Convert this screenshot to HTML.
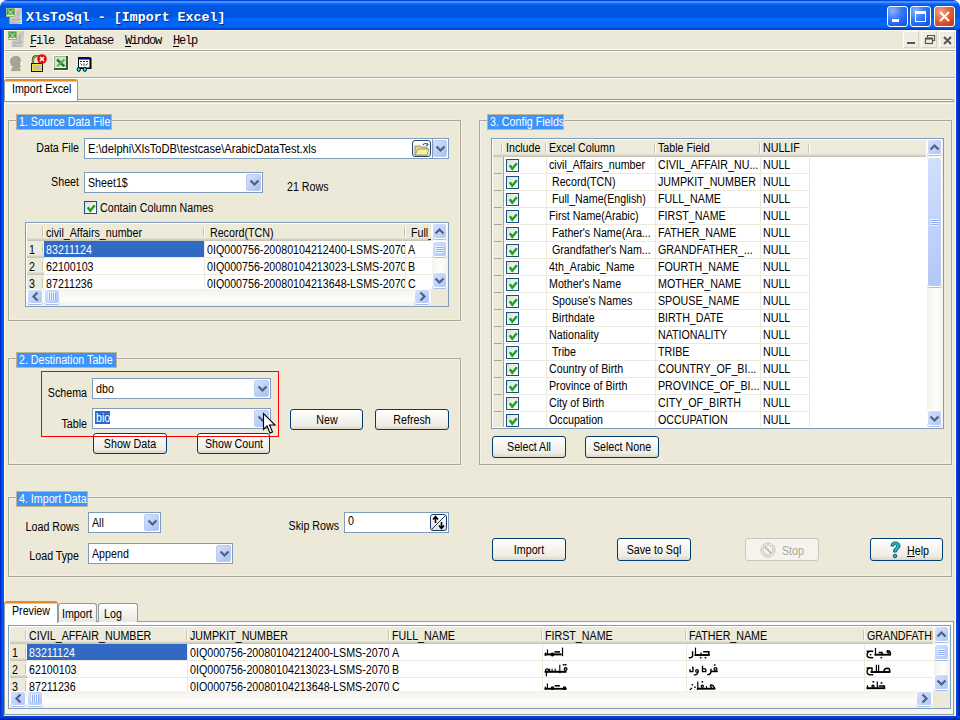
<!DOCTYPE html><html><head><meta charset="utf-8"><style>
*{box-sizing:border-box;margin:0;padding:0}
html,body{width:960px;height:720px;overflow:hidden;background:#fff}
body{position:relative;font-family:"Liberation Sans",sans-serif;font-size:12px;color:#000;letter-spacing:0}
.ab{position:absolute}
.t{position:absolute;white-space:nowrap;line-height:13px;transform:scaleX(var(--sx,0.89));transform-origin:0 0}
.gb{position:absolute;border:1px solid #ACA899;box-shadow:inset 1px 1px 0 #F3F1E6, 1px 1px 0 #F3F1E6, -1px -1px 0 #F1EFE2, inset -1px -1px 0 #F1EFE2}
.gl{position:absolute;background:#3D93F8;border:1px solid #BDB498;color:#fff;height:16px;line-height:13px;padding-left:2px;white-space:nowrap}
.ed{position:absolute;background:#fff;border:1px solid #7F9DB9}
.cbtn{position:absolute;width:15px;border-radius:2px;border:1px solid #B9CBF4;background:linear-gradient(135deg,#D6E2FC 0%,#BFD0F8 50%,#A9C0F3 100%)}
.btn{position:absolute;border:1px solid #003C74;border-radius:3px;background:linear-gradient(to bottom,#FFFFFF 0%,#F6F5F0 40%,#EEEDE5 80%,#DAD6C9 100%);text-align:center;white-space:nowrap;line-height:18px}
.sb{position:absolute;border-radius:3px;border:1px solid #fff;background:linear-gradient(135deg,#D3E0FD 0%,#C3D4FB 50%,#B1C6F6 100%)}
.chk{position:absolute;width:13px;height:13px;border:1px solid #1C5180;background:linear-gradient(135deg,#DCDCD7 0%,#F4F4F1 60%,#FFFFFF 100%)}
.hdr{position:absolute;background:#EBEADB;box-shadow:inset 0 -1px 0 #CBC7B8, inset 0 -2px 0 #D6D2C2, inset 0 -3px 0 #E2DECD}
.cell{position:absolute;white-space:nowrap;overflow:hidden;line-height:16px;padding-left:2px}
.cell>i{font-style:normal;display:inline-block;transform:scaleX(0.89);transform-origin:0 0}
</style></head><body>
<div class="ab" style="left:0;top:20px;width:960px;height:700px;background:#ECE9D8"></div>
<div class="ab" style="left:0;top:0;width:960px;height:30px;border-radius:7px 7px 0 0;background:linear-gradient(to bottom,#0A46DA 0px,#0A46DA 1px,#3C92FF 1px,#3C92FF 3px,#0C6CFF 3px,#0A64F4 5px,#0058E2 5px,#0058E2 18px,#0067F8 18px,#0065F6 27px,#0052E4 28px,#0036C6 30px)"></div>
<div class="ab" style="left:0;top:29px;width:4px;height:691px;background:linear-gradient(to right,#0019CF,#0055EA 50%,#0056EE)"></div>
<div class="ab" style="left:956px;top:29px;width:4px;height:691px;background:linear-gradient(to right,#0050E6,#0030C0 60%,#001A8C)"></div>
<div class="ab" style="left:0;top:716px;width:960px;height:4px;background:linear-gradient(to bottom,#0050E6,#0030C0 60%,#001A8C)"></div>
<div class="ab" style="left:4px;top:30px;width:1px;height:686px;background:#FFF8E4"></div>
<div class="ab" style="left:955px;top:30px;width:1px;height:686px;background:#FFF8E4"></div>
<div class="ab" style="left:4px;top:30px;width:952px;height:1px;background:#FFF8E4"></div>
<svg class="ab" style="left:6px;top:8px" width="17" height="17" viewBox="0 0 17 17">
<defs><linearGradient id="gg6" x1="0" y1="0" x2="1" y2="1"><stop offset="0" stop-color="#F2F2EE"/><stop offset="0.5" stop-color="#C4C4C0"/><stop offset="1" stop-color="#E4E4E0"/></linearGradient></defs>
<rect x="3.5" y="0" width="12.5" height="16" fill="url(#gg6)"/>
<path d="M5 11c2 1.5 7 1.5 10 0M5 14c2 1.5 7 1.5 10 0M12 3v10" stroke="#A8A8A4" stroke-width="1" fill="none"/>
<rect x="0" y="0" width="9" height="9" fill="#D8D0A8"/>
<rect x="0.5" y="0.5" width="8" height="8" fill="#4E9A4A"/>
<path d="M2 2l5 5M7 2l-5 5" stroke="#8ED88A" stroke-width="1.5"/>
<path d="M1 7.5h7" stroke="#E8F4E0" stroke-width="1"/>
</svg>
<div class="t" style="left:26px;top:10px;font-family:'Liberation Mono', monospace;font-weight:bold;font-size:13.3px;color:#fff;letter-spacing:0;--sx:1;text-shadow:1px 1px 0 #0B2A8A;line-height:16px">XlsToSql - [Import Excel]</div>
<div class="ab" style="left:887px;top:6px;width:21px;height:21px;border:1px solid #fff;border-radius:3px;background:radial-gradient(circle at 25% 20%,#8FB4FF 0%,#3C7CF6 40%,#1F5FE6 75%,#1650D8 100%)"><div class="ab" style="left:4px;top:12px;width:7px;height:3px;background:#fff"></div></div>
<div class="ab" style="left:910px;top:6px;width:21px;height:21px;border:1px solid #fff;border-radius:3px;background:radial-gradient(circle at 25% 20%,#8FB4FF 0%,#3C7CF6 40%,#1F5FE6 75%,#1650D8 100%)"><div class="ab" style="left:4px;top:4px;width:11px;height:11px;border:1px solid #fff;border-top-width:3px"></div></div>
<div class="ab" style="left:934px;top:6px;width:21px;height:21px;border:1px solid #fff;border-radius:3px;background:radial-gradient(circle at 30% 25%,#F0A48C 0%,#E26A43 40%,#D4451E 75%,#C23A14 100%)"><svg class="ab" style="left:0;top:0" width="19" height="19"><path d="M5 5L14 14M14 5L5 14" stroke="#fff" stroke-width="2.2"/></svg></div>
<svg class="ab" style="left:8px;top:31px" width="17" height="17" viewBox="0 0 17 17">
<defs><linearGradient id="gg8" x1="0" y1="0" x2="1" y2="1"><stop offset="0" stop-color="#F2F2EE"/><stop offset="0.5" stop-color="#C4C4C0"/><stop offset="1" stop-color="#E4E4E0"/></linearGradient></defs>
<rect x="3.5" y="0" width="12.5" height="16" fill="url(#gg8)"/>
<path d="M5 11c2 1.5 7 1.5 10 0M5 14c2 1.5 7 1.5 10 0M12 3v10" stroke="#A8A8A4" stroke-width="1" fill="none"/>
<rect x="0" y="0" width="9" height="9" fill="#D8D0A8"/>
<rect x="0.5" y="0.5" width="8" height="8" fill="#4E9A4A"/>
<path d="M2 2l5 5M7 2l-5 5" stroke="#8ED88A" stroke-width="1.5"/>
<path d="M1 7.5h7" stroke="#E8F4E0" stroke-width="1"/>
</svg>
<div class="t" style="left:30px;top:34px;font-family:'Liberation Mono', monospace;font-size:12px;letter-spacing:-1.2px;line-height:14px;--sx:1"><u style="text-underline-offset:2px">F</u>ile</div>
<div class="t" style="left:65px;top:34px;font-family:'Liberation Mono', monospace;font-size:12px;letter-spacing:-1.2px;line-height:14px;--sx:1"><u style="text-underline-offset:2px">D</u>atabase</div>
<div class="t" style="left:125px;top:34px;font-family:'Liberation Mono', monospace;font-size:12px;letter-spacing:-1.2px;line-height:14px;--sx:1"><u style="text-underline-offset:2px">W</u>indow</div>
<div class="t" style="left:173px;top:34px;font-family:'Liberation Mono', monospace;font-size:12px;letter-spacing:-1.2px;line-height:14px;--sx:1"><u style="text-underline-offset:2px">H</u>elp</div>
<div class="ab" style="left:903px;top:31px;width:16px;height:17px;border:1px solid #fff;border-right-color:#D8D4C4;border-bottom-color:#D8D4C4;background:#EFEDE2"><div class="ab" style="left:3px;top:10px;width:8px;height:2px;background:#555"></div></div>
<div class="ab" style="left:921px;top:31px;width:16px;height:17px;border:1px solid #fff;border-right-color:#D8D4C4;border-bottom-color:#D8D4C4;background:#EFEDE2"><svg class="ab" style="left:0;top:0" width="15" height="16"><path d="M5.5 5.5V3.5H12.5V8.5H10.5" stroke="#555" stroke-width="1.2" fill="none"/><rect x="3.5" y="6.5" width="7" height="5" stroke="#555" stroke-width="1.2" fill="none"/><path d="M3.5 6.5h7" stroke="#555" stroke-width="2"/></svg></div>
<div class="ab" style="left:939px;top:31px;width:16px;height:17px;border:1px solid #fff;border-right-color:#D8D4C4;border-bottom-color:#D8D4C4;background:#EFEDE2"><svg class="ab" style="left:0;top:0" width="15" height="16"><path d="M4 5L11 12M11 5L4 12" stroke="#555" stroke-width="2"/></svg></div>
<div class="ab" style="left:5px;top:49px;width:950px;height:1px;background:#fff"></div>
<div class="ab" style="left:5px;top:50px;width:950px;height:1px;background:#ACA899"></div>
<div class="ab" style="left:5px;top:51px;width:950px;height:1px;background:#fff"></div>
<svg class="ab" style="left:8px;top:54px" width="86" height="20" viewBox="0 0 86 20">
<path d="M8 2c3 0 5 2 5 5 0 2-1 3-1 4l1 1c-1 1-1 2-1 3l1 2H3c0-2 1-3 2-4-2-1-3-3-3-6 0-3 3-5 6-5z" fill="#A6A497"/>
<path d="M12 8l2 1-1 2" stroke="#fff" stroke-width="1" fill="none"/>
<path d="M25 9V6c0-3 2-4 4-4s4 1 4 4v3" stroke="#1A1A1A" stroke-width="2.2" fill="none"/>
<path d="M25 9V6c0-3 2-4 4-4s4 1 4 4v3" stroke="#F4E64A" stroke-width="1" fill="none"/>
<rect x="23.5" y="9.5" width="11" height="8" fill="#B8B8B8" stroke="#111" stroke-width="1"/>
<rect x="24.5" y="10.5" width="9" height="6" fill="#C0C0C0" stroke="#F2E23A" stroke-width="1"/>
<circle cx="34" cy="5" r="4.8" fill="#E01010"/>
<path d="M32 3l4 4M36 3l-4 4" stroke="#fff" stroke-width="1.5"/>
<rect x="45" y="1" width="16" height="16" fill="#FAFAF4"/>
<rect x="46" y="2" width="14" height="14" fill="#D2E8CC"/>
<path d="M46.5 15.5V2.5H59" stroke="#9AB890" stroke-width="1" fill="none"/>
<path d="M46 15H59V2" stroke="#2F5F25" stroke-width="2" fill="none"/>
<path d="M49 5.5L56.5 12.5" stroke="#2E7A2E" stroke-width="2.4"/>
<path d="M56.5 5.5L49 12.5" stroke="#58A858" stroke-width="1.8"/>
<rect x="47.5" y="12.8" width="10" height="1.2" fill="#EEF6EA"/>
<rect x="71" y="4" width="12.5" height="11" fill="#000"/>
<rect x="70.5" y="3.5" width="11.5" height="10.5" fill="#fff" stroke="#000" stroke-width="1"/>
<rect x="70" y="3" width="12.5" height="2.6" fill="#00007A"/>
<path d="M72 7.5h2M75 7.5h2M78 7.5h2M72.5 9.5l1.5 1.5M76 9.5v2M79.5 9.5l-1.5 2" stroke="#222" stroke-width="1"/>
<path d="M72 14.2h3.5" stroke="#000" stroke-width="1.2"/>
<ellipse cx="70.8" cy="15.4" rx="1.6" ry="2" fill="#22E4F8" stroke="#000" stroke-width="1"/>
<ellipse cx="76.8" cy="15.4" rx="1.6" ry="2" fill="#22E4F8" stroke="#000" stroke-width="1"/>
</svg>
<div class="ab" style="left:5px;top:77px;width:950px;height:1px;background:#ACA899"></div>
<div class="ab" style="left:5px;top:78px;width:950px;height:1px;background:#fff"></div>
<div class="ab" style="left:77px;top:99px;width:877px;height:3px;border:1px solid #919B9C;border-left:none;border-radius:0 2px 2px 0;background:#fff"></div>
<div class="ab" style="left:4px;top:101px;width:950px;height:1px;background:#919B9C"></div>
<div class="ab" style="left:5px;top:103px;width:947px;height:1px;background:#F7F6F0"></div>
<div class="ab" style="left:4px;top:79px;width:74px;height:22px;border:1px solid #919B9C;border-top:none;border-bottom:none;border-radius:3px 3px 0 0;background:#fff;overflow:hidden"><div class="ab" style="left:0;top:0;width:74px;height:2px;background:#E68B2C"></div><div class="ab" style="left:0;top:2px;width:74px;height:1px;background:#FFC73C"></div></div>
<div class="t" style="left:12px;top:83px">Import Excel</div>
<div class="gb" style="left:8px;top:120px;width:453px;height:201px"></div>
<div class="ab" style="left:16px;top:114px;width:96px;height:16px;background:#3D93F8;border:1px solid #BDB498;left:16px"></div>
<div class="t" style="left:19px;top:116px;color:#fff">1. Source Data File</div>
<div class="t" style="left:-221px;width:300px;text-align:right;top:142px;transform-origin:100% 0;">Data File</div>
<div class="ed" style="left:84px;top:138px;width:365px;height:21px"></div>
<div class="t" style="left:88px;top:143px;--sx:0.925">E:\delphi\XlsToDB\testcase\ArabicDataTest.xls</div>
<div class="ab" style="left:412px;top:140px;width:19px;height:17px;border:1px solid #2A4A78;border-radius:3px;background:linear-gradient(#FFFFFF,#E8E6DC)">
<svg class="ab" style="left:1px;top:1px" width="16" height="14" viewBox="0 0 16 14">
<path d="M1 4h5l1 1h6v8H1z" fill="#E0D890" stroke="#9A8A3A" stroke-width="0.8"/>
<path d="M1 13l3-6h11l-2 6z" fill="#F4EEB0" stroke="#9A8A3A" stroke-width="0.8"/>
<path d="M9 3c1-2 4-2 5 0" stroke="#2050C0" stroke-width="1.2" fill="none"/><path d="M13 1l1 2-2 0.5" stroke="#2050C0" stroke-width="1" fill="none"/>
</svg></div>
<div class="ab" style="left:432px;top:139px;width:1px;height:19px;background:#7F9DB9"></div>
<div class="cbtn" style="left:433px;top:140px;height:17px;width:14px"><svg class="ab" style="left:-1px;top:0" width="15" height="15"><path d="M3.5 5.5L7.5 9.5L11.5 5.5" stroke="#4D6185" stroke-width="2.2" fill="none"/></svg></div>
<div class="t" style="left:-221px;width:300px;text-align:right;top:176px;transform-origin:100% 0;">Sheet</div>
<div class="ed" style="left:84px;top:172px;width:179px;height:21px"></div>
<div class="t" style="left:88px;top:177px;">Sheet1$</div>
<div class="cbtn" style="left:246px;top:174px;height:17px"><svg class="ab" style="left:-0.5px;top:0.0px" width="15" height="15"><path d="M3.5 5.5L7.5 9.5L11.5 5.5" stroke="#4D6185" stroke-width="2.2" fill="none"/></svg></div>
<div class="t" style="left:287px;top:181px;">21 Rows</div>
<div class="chk" style="left:84px;top:201px"><svg class="ab" style="left:1px;top:1px" width="11" height="11"><path d="M1.8 4.3L4.3 7.8L8.8 2.3" stroke="#21A121" stroke-width="2.5" fill="none"/></svg></div>
<div class="t" style="left:100px;top:202px;">Contain Column Names</div>
<div class="ab" style="left:25px;top:222px;width:424px;height:85px;border:1px solid #7F9DB9;background:#fff"></div>
<div class="ab" style="left:27px;top:224px;width:404px;height:65px;overflow:hidden;background:#fff"><div class="hdr" style="left:0;top:0;width:404px;height:17px"></div><div class="ab" style="left:15px;top:3px;width:1px;height:10px;background:#C7C5B2"></div><div class="ab" style="left:16px;top:3px;width:1px;height:10px;background:#fff"></div><div class="cell" style="left:17px;top:0px;width:161px;height:17px;line-height:18px"><i>civil_Affairs_number</i></div><div class="ab" style="left:176px;top:3px;width:1px;height:10px;background:#C7C5B2"></div><div class="ab" style="left:177px;top:3px;width:1px;height:10px;background:#fff"></div><div class="cell" style="left:178px;top:0px;width:201px;height:17px;line-height:18px"><i>&nbsp;Record(TCN)</i></div><div class="ab" style="left:377px;top:3px;width:1px;height:10px;background:#C7C5B2"></div><div class="ab" style="left:378px;top:3px;width:1px;height:10px;background:#fff"></div><div class="cell" style="left:379px;top:0px;width:55px;height:17px;line-height:18px"><i>&nbsp;Full_Name</i></div><div class="ab" style="left:432px;top:3px;width:1px;height:10px;background:#C7C5B2"></div><div class="ab" style="left:433px;top:3px;width:1px;height:10px;background:#fff"></div><div class="hdr" style="left:0px;top:17px;width:17px;height:17px"></div><div class="ab" style="left:15px;top:20px;width:1px;height:10px;background:#C7C5B2"></div><div class="ab" style="left:16px;top:20px;width:1px;height:10px;background:#fff"></div><div class="cell" style="left:0px;top:17px;width:20px;height:17px;line-height:18px"><i>1</i></div><div class="cell" style="left:17px;top:17px;width:160px;height:16px;line-height:18px;background:#316AC5;color:#fff;"><i>83211124</i></div><div class="ab" style="left:177px;top:17px;width:1px;height:17px;background:#EBEADB"></div><div class="cell" style="left:178px;top:17px;width:200px;height:16px;line-height:18px;"><i>0IQ000756-20080104212400-LSMS-20701</i></div><div class="ab" style="left:378px;top:17px;width:1px;height:17px;background:#EBEADB"></div><div class="cell" style="left:379px;top:17px;width:54px;height:16px;line-height:18px;"><i>A</i></div><div class="ab" style="left:433px;top:17px;width:1px;height:17px;background:#EBEADB"></div><div class="ab" style="left:17px;top:33px;width:417px;height:1px;background:#EBEADB"></div><div class="hdr" style="left:0px;top:34px;width:17px;height:17px"></div><div class="ab" style="left:15px;top:37px;width:1px;height:10px;background:#C7C5B2"></div><div class="ab" style="left:16px;top:37px;width:1px;height:10px;background:#fff"></div><div class="cell" style="left:0px;top:34px;width:20px;height:17px;line-height:18px"><i>2</i></div><div class="cell" style="left:17px;top:34px;width:160px;height:16px;line-height:18px;"><i>62100103</i></div><div class="ab" style="left:177px;top:34px;width:1px;height:17px;background:#EBEADB"></div><div class="cell" style="left:178px;top:34px;width:200px;height:16px;line-height:18px;"><i>0IQ000756-20080104213023-LSMS-20701</i></div><div class="ab" style="left:378px;top:34px;width:1px;height:17px;background:#EBEADB"></div><div class="cell" style="left:379px;top:34px;width:54px;height:16px;line-height:18px;"><i>B</i></div><div class="ab" style="left:433px;top:34px;width:1px;height:17px;background:#EBEADB"></div><div class="ab" style="left:17px;top:50px;width:417px;height:1px;background:#EBEADB"></div><div class="hdr" style="left:0px;top:51px;width:17px;height:17px"></div><div class="ab" style="left:15px;top:54px;width:1px;height:10px;background:#C7C5B2"></div><div class="ab" style="left:16px;top:54px;width:1px;height:10px;background:#fff"></div><div class="cell" style="left:0px;top:51px;width:20px;height:17px;line-height:18px"><i>3</i></div><div class="cell" style="left:17px;top:51px;width:160px;height:16px;line-height:18px;"><i>87211236</i></div><div class="ab" style="left:177px;top:51px;width:1px;height:17px;background:#EBEADB"></div><div class="cell" style="left:178px;top:51px;width:200px;height:16px;line-height:18px;"><i>0IQ000756-20080104213648-LSMS-20701</i></div><div class="ab" style="left:378px;top:51px;width:1px;height:17px;background:#EBEADB"></div><div class="cell" style="left:379px;top:51px;width:54px;height:16px;line-height:18px;"><i>C</i></div><div class="ab" style="left:433px;top:51px;width:1px;height:17px;background:#EBEADB"></div><div class="ab" style="left:17px;top:67px;width:417px;height:1px;background:#EBEADB"></div></div>
<div class="ab" style="left:431px;top:224px;width:17px;height:65px;background:linear-gradient(to right,#F3F1EA,#FEFEFB 60%,#F3F1EA)"></div>
<div class="ab" style="left:431px;top:224px;width:17px;height:65px;background:linear-gradient(to right,#F3F1EA,#FEFEFB 60%,#F3F1EA);box-shadow:inset 1px 0 0 #fff"></div>
<div class="sb" style="left:432px;top:223px;width:15px;height:16px;box-shadow:0 1px 0 #A9BDE9"><svg class="ab" style="left:-1.0px;top:-0.5px" width="15" height="15"><path d="M3.5 9.5L7.5 5.5L11.5 9.5" stroke="#4D6185" stroke-width="2.2" fill="none"/></svg></div>
<div class="sb" style="left:432px;top:241px;width:15px;height:16px;box-shadow:0 1px 0 #A9BDE9"><svg class="ab" style="left:2px;top:3px" width="8" height="8"><path d="M0 1.5h8M0 3.5h8M0 5.5h8M0 7.5h8" stroke="#EEF4FE" stroke-width="1"/><path d="M1 2.5h7M1 4.5h7M1 6.5h7" stroke="#8CB0F8" stroke-width="1"/></svg></div>
<div class="sb" style="left:432px;top:272px;width:15px;height:16px;box-shadow:0 1px 0 #A9BDE9"><svg class="ab" style="left:-1.0px;top:-0.5px" width="15" height="15"><path d="M3.5 5.5L7.5 9.5L11.5 5.5" stroke="#4D6185" stroke-width="2.2" fill="none"/></svg></div>
<div class="ab" style="left:27px;top:289px;width:404px;height:17px;background:linear-gradient(to bottom,#F3F1EA,#FEFEFB 60%,#F3F1EA)"></div>
<div class="sb" style="left:27px;top:289px;width:16px;height:15px;box-shadow:0 1px 0 #A9BDE9"><svg class="ab" style="left:-0.5px;top:-1.0px" width="15" height="15"><path d="M9.5 3.5L5.5 7.5L9.5 11.5" stroke="#4D6185" stroke-width="2.2" fill="none"/></svg></div>
<div class="sb" style="left:44px;top:289px;width:16px;height:15px;box-shadow:0 1px 0 #A9BDE9"><svg class="ab" style="left:3px;top:2px" width="9" height="8"><path d="M0.5 0v8M2.5 0v8M4.5 0v8M6.5 0v8" stroke="#EEF4FE" stroke-width="1"/><path d="M1.5 1v7M3.5 1v7M5.5 1v7M7.5 1v7" stroke="#8CB0F8" stroke-width="1"/></svg></div>
<div class="sb" style="left:414px;top:289px;width:16px;height:15px;box-shadow:0 1px 0 #A9BDE9"><svg class="ab" style="left:-0.5px;top:-1.0px" width="15" height="15"><path d="M5.5 3.5L9.5 7.5L5.5 11.5" stroke="#4D6185" stroke-width="2.2" fill="none"/></svg></div>
<div class="ab" style="left:431px;top:289px;width:17px;height:17px;background:#ECE9D8"></div>
<div class="gb" style="left:8px;top:358px;width:453px;height:107px"></div>
<div class="ab" style="left:16px;top:352px;width:101px;height:16px;background:#3D93F8;border:1px solid #BDB498;left:16px"></div>
<div class="t" style="left:19px;top:354px;color:#fff">2. Destination Table</div>
<div class="t" style="left:-213px;width:300px;text-align:right;top:387px;transform-origin:100% 0;">Schema</div>
<div class="ed" style="left:92px;top:378px;width:179px;height:21px"></div>
<div class="t" style="left:96px;top:383px;">dbo</div>
<div class="cbtn" style="left:254px;top:380px;height:17px"><svg class="ab" style="left:-0.5px;top:0.0px" width="15" height="15"><path d="M3.5 5.5L7.5 9.5L11.5 5.5" stroke="#4D6185" stroke-width="2.2" fill="none"/></svg></div>
<div class="t" style="left:-213px;width:300px;text-align:right;top:418px;transform-origin:100% 0;">Table</div>
<div class="ed" style="left:92px;top:408px;width:179px;height:21px"></div>
<div class="cbtn" style="left:254px;top:410px;height:17px"><svg class="ab" style="left:-0.5px;top:0.0px" width="15" height="15"><path d="M3.5 5.5L7.5 9.5L11.5 5.5" stroke="#4D6185" stroke-width="2.2" fill="none"/></svg></div>
<div class="ab" style="left:95px;top:411px;width:15px;height:13px;background:#316AC5"></div>
<div class="t" style="left:96px;top:412px;color:#fff">bio</div>
<div class="btn" style="left:93px;top:433px;width:74px;height:21px;"></div>
<div class="t" style="left:-20.0px;top:438px;width:300px;text-align:center;transform-origin:50% 0">Show Data</div>
<div class="btn" style="left:197px;top:433px;width:73px;height:21px;"></div>
<div class="t" style="left:83.5px;top:438px;width:300px;text-align:center;transform-origin:50% 0">Show Count</div>
<div class="btn" style="left:290px;top:409px;width:73px;height:21px;"></div>
<div class="t" style="left:176.5px;top:414px;width:300px;text-align:center;transform-origin:50% 0">New</div>
<div class="btn" style="left:375px;top:409px;width:74px;height:21px;"></div>
<div class="t" style="left:262.0px;top:414px;width:300px;text-align:center;transform-origin:50% 0">Refresh</div>
<div class="ab" style="left:41px;top:371px;width:238px;height:66px;border:1px solid #FF0000"></div>
<svg class="ab" style="left:262px;top:412px" width="16" height="24" viewBox="0 0 16 24">
<path d="M1.5 1.5V17.5L5 14L8 21L10.5 20L7.5 13H13Z" fill="#fff" stroke="#000" stroke-width="1.1" stroke-linejoin="miter"/>
</svg>
<div class="gb" style="left:479px;top:120px;width:473px;height:345px"></div>
<div class="ab" style="left:16px;top:114px;width:77px;height:16px;background:#3D93F8;border:1px solid #BDB498;left:487px"></div>
<div class="t" style="left:490px;top:116px;color:#fff">3. Config Fields</div>
<div class="ab" style="left:491px;top:138px;width:453px;height:291px;border:1px solid #7F9DB9;background:#fff"></div>
<div class="ab" style="left:493px;top:140px;width:433px;height:287px;overflow:hidden;background:#fff"><div class="hdr" style="left:0;top:0;width:433px;height:17px"></div><div class="ab" style="left:8px;top:3px;width:1px;height:10px;background:#C7C5B2"></div><div class="ab" style="left:9px;top:3px;width:1px;height:10px;background:#fff"></div><div class="cell" style="left:11px;top:0px;width:43px;height:17px;line-height:16px"><i>Include</i></div><div class="ab" style="left:52px;top:3px;width:1px;height:10px;background:#C7C5B2"></div><div class="ab" style="left:53px;top:3px;width:1px;height:10px;background:#fff"></div><div class="cell" style="left:54px;top:0px;width:109px;height:17px;line-height:16px"><i>Excel Column</i></div><div class="ab" style="left:161px;top:3px;width:1px;height:10px;background:#C7C5B2"></div><div class="ab" style="left:162px;top:3px;width:1px;height:10px;background:#fff"></div><div class="cell" style="left:163px;top:0px;width:105px;height:17px;line-height:16px"><i>Table Field</i></div><div class="ab" style="left:266px;top:3px;width:1px;height:10px;background:#C7C5B2"></div><div class="ab" style="left:267px;top:3px;width:1px;height:10px;background:#fff"></div><div class="cell" style="left:268px;top:0px;width:49px;height:17px;line-height:16px"><i>NULLIF</i></div><div class="ab" style="left:315px;top:3px;width:1px;height:10px;background:#C7C5B2"></div><div class="ab" style="left:316px;top:3px;width:1px;height:10px;background:#fff"></div><div class="ab" style="left:-1px;top:17px;width:11px;height:17px;background:#EBEADB"></div><div class="ab" style="left:10px;top:17px;width:1px;height:17px;background:#A9A696"></div><div class="ab" style="left:1px;top:33px;width:8px;height:1px;background:#A9A696"></div><div class="ab" style="left:1px;top:34px;width:8px;height:1px;background:#fff"></div><div class="cell" style="left:11px;top:17px;width:42px;height:16px;line-height:16px;"><i></i></div><div class="ab" style="left:53px;top:17px;width:1px;height:17px;background:#EBEADB"></div><div class="cell" style="left:54px;top:17px;width:108px;height:16px;line-height:16px;"><i>civil_Affairs_number</i></div><div class="ab" style="left:162px;top:17px;width:1px;height:17px;background:#EBEADB"></div><div class="cell" style="left:163px;top:17px;width:104px;height:16px;line-height:16px;"><i>CIVIL_AFFAIR_NU...</i></div><div class="ab" style="left:267px;top:17px;width:1px;height:17px;background:#EBEADB"></div><div class="cell" style="left:268px;top:17px;width:48px;height:16px;line-height:16px;"><i>NULL</i></div><div class="ab" style="left:316px;top:17px;width:1px;height:17px;background:#EBEADB"></div><div class="ab" style="left:11px;top:33px;width:306px;height:1px;background:#EBEADB"></div><div class="ab" style="left:-1px;top:34px;width:11px;height:17px;background:#EBEADB"></div><div class="ab" style="left:10px;top:34px;width:1px;height:17px;background:#A9A696"></div><div class="ab" style="left:1px;top:50px;width:8px;height:1px;background:#A9A696"></div><div class="ab" style="left:1px;top:51px;width:8px;height:1px;background:#fff"></div><div class="cell" style="left:11px;top:34px;width:42px;height:16px;line-height:16px;"><i></i></div><div class="ab" style="left:53px;top:34px;width:1px;height:17px;background:#EBEADB"></div><div class="cell" style="left:54px;top:34px;width:108px;height:16px;line-height:16px;"><i>&nbsp;Record(TCN)</i></div><div class="ab" style="left:162px;top:34px;width:1px;height:17px;background:#EBEADB"></div><div class="cell" style="left:163px;top:34px;width:104px;height:16px;line-height:16px;"><i>JUMPKIT_NUMBER</i></div><div class="ab" style="left:267px;top:34px;width:1px;height:17px;background:#EBEADB"></div><div class="cell" style="left:268px;top:34px;width:48px;height:16px;line-height:16px;"><i>NULL</i></div><div class="ab" style="left:316px;top:34px;width:1px;height:17px;background:#EBEADB"></div><div class="ab" style="left:11px;top:50px;width:306px;height:1px;background:#EBEADB"></div><div class="ab" style="left:-1px;top:51px;width:11px;height:17px;background:#EBEADB"></div><div class="ab" style="left:10px;top:51px;width:1px;height:17px;background:#A9A696"></div><div class="ab" style="left:1px;top:67px;width:8px;height:1px;background:#A9A696"></div><div class="ab" style="left:1px;top:68px;width:8px;height:1px;background:#fff"></div><div class="cell" style="left:11px;top:51px;width:42px;height:16px;line-height:16px;"><i></i></div><div class="ab" style="left:53px;top:51px;width:1px;height:17px;background:#EBEADB"></div><div class="cell" style="left:54px;top:51px;width:108px;height:16px;line-height:16px;"><i>&nbsp;Full_Name(English)</i></div><div class="ab" style="left:162px;top:51px;width:1px;height:17px;background:#EBEADB"></div><div class="cell" style="left:163px;top:51px;width:104px;height:16px;line-height:16px;"><i>FULL_NAME</i></div><div class="ab" style="left:267px;top:51px;width:1px;height:17px;background:#EBEADB"></div><div class="cell" style="left:268px;top:51px;width:48px;height:16px;line-height:16px;"><i>NULL</i></div><div class="ab" style="left:316px;top:51px;width:1px;height:17px;background:#EBEADB"></div><div class="ab" style="left:11px;top:67px;width:306px;height:1px;background:#EBEADB"></div><div class="ab" style="left:-1px;top:68px;width:11px;height:17px;background:#EBEADB"></div><div class="ab" style="left:10px;top:68px;width:1px;height:17px;background:#A9A696"></div><div class="ab" style="left:1px;top:84px;width:8px;height:1px;background:#A9A696"></div><div class="ab" style="left:1px;top:85px;width:8px;height:1px;background:#fff"></div><div class="cell" style="left:11px;top:68px;width:42px;height:16px;line-height:16px;"><i></i></div><div class="ab" style="left:53px;top:68px;width:1px;height:17px;background:#EBEADB"></div><div class="cell" style="left:54px;top:68px;width:108px;height:16px;line-height:16px;"><i>First Name(Arabic)</i></div><div class="ab" style="left:162px;top:68px;width:1px;height:17px;background:#EBEADB"></div><div class="cell" style="left:163px;top:68px;width:104px;height:16px;line-height:16px;"><i>FIRST_NAME</i></div><div class="ab" style="left:267px;top:68px;width:1px;height:17px;background:#EBEADB"></div><div class="cell" style="left:268px;top:68px;width:48px;height:16px;line-height:16px;"><i>NULL</i></div><div class="ab" style="left:316px;top:68px;width:1px;height:17px;background:#EBEADB"></div><div class="ab" style="left:11px;top:84px;width:306px;height:1px;background:#EBEADB"></div><div class="ab" style="left:-1px;top:85px;width:11px;height:17px;background:#EBEADB"></div><div class="ab" style="left:10px;top:85px;width:1px;height:17px;background:#A9A696"></div><div class="ab" style="left:1px;top:101px;width:8px;height:1px;background:#A9A696"></div><div class="ab" style="left:1px;top:102px;width:8px;height:1px;background:#fff"></div><div class="cell" style="left:11px;top:85px;width:42px;height:16px;line-height:16px;"><i></i></div><div class="ab" style="left:53px;top:85px;width:1px;height:17px;background:#EBEADB"></div><div class="cell" style="left:54px;top:85px;width:108px;height:16px;line-height:16px;"><i>&nbsp;Father's Name(Ara...</i></div><div class="ab" style="left:162px;top:85px;width:1px;height:17px;background:#EBEADB"></div><div class="cell" style="left:163px;top:85px;width:104px;height:16px;line-height:16px;"><i>FATHER_NAME</i></div><div class="ab" style="left:267px;top:85px;width:1px;height:17px;background:#EBEADB"></div><div class="cell" style="left:268px;top:85px;width:48px;height:16px;line-height:16px;"><i>NULL</i></div><div class="ab" style="left:316px;top:85px;width:1px;height:17px;background:#EBEADB"></div><div class="ab" style="left:11px;top:101px;width:306px;height:1px;background:#EBEADB"></div><div class="ab" style="left:-1px;top:102px;width:11px;height:17px;background:#EBEADB"></div><div class="ab" style="left:10px;top:102px;width:1px;height:17px;background:#A9A696"></div><div class="ab" style="left:1px;top:118px;width:8px;height:1px;background:#A9A696"></div><div class="ab" style="left:1px;top:119px;width:8px;height:1px;background:#fff"></div><div class="cell" style="left:11px;top:102px;width:42px;height:16px;line-height:16px;"><i></i></div><div class="ab" style="left:53px;top:102px;width:1px;height:17px;background:#EBEADB"></div><div class="cell" style="left:54px;top:102px;width:108px;height:16px;line-height:16px;"><i>&nbsp;Grandfather's Nam...</i></div><div class="ab" style="left:162px;top:102px;width:1px;height:17px;background:#EBEADB"></div><div class="cell" style="left:163px;top:102px;width:104px;height:16px;line-height:16px;"><i>GRANDFATHER_...</i></div><div class="ab" style="left:267px;top:102px;width:1px;height:17px;background:#EBEADB"></div><div class="cell" style="left:268px;top:102px;width:48px;height:16px;line-height:16px;"><i>NULL</i></div><div class="ab" style="left:316px;top:102px;width:1px;height:17px;background:#EBEADB"></div><div class="ab" style="left:11px;top:118px;width:306px;height:1px;background:#EBEADB"></div><div class="ab" style="left:-1px;top:119px;width:11px;height:17px;background:#EBEADB"></div><div class="ab" style="left:10px;top:119px;width:1px;height:17px;background:#A9A696"></div><div class="ab" style="left:1px;top:135px;width:8px;height:1px;background:#A9A696"></div><div class="ab" style="left:1px;top:136px;width:8px;height:1px;background:#fff"></div><div class="cell" style="left:11px;top:119px;width:42px;height:16px;line-height:16px;"><i></i></div><div class="ab" style="left:53px;top:119px;width:1px;height:17px;background:#EBEADB"></div><div class="cell" style="left:54px;top:119px;width:108px;height:16px;line-height:16px;"><i>4th_Arabic_Name</i></div><div class="ab" style="left:162px;top:119px;width:1px;height:17px;background:#EBEADB"></div><div class="cell" style="left:163px;top:119px;width:104px;height:16px;line-height:16px;"><i>FOURTH_NAME</i></div><div class="ab" style="left:267px;top:119px;width:1px;height:17px;background:#EBEADB"></div><div class="cell" style="left:268px;top:119px;width:48px;height:16px;line-height:16px;"><i>NULL</i></div><div class="ab" style="left:316px;top:119px;width:1px;height:17px;background:#EBEADB"></div><div class="ab" style="left:11px;top:135px;width:306px;height:1px;background:#EBEADB"></div><div class="ab" style="left:-1px;top:136px;width:11px;height:17px;background:#EBEADB"></div><div class="ab" style="left:10px;top:136px;width:1px;height:17px;background:#A9A696"></div><div class="ab" style="left:1px;top:152px;width:8px;height:1px;background:#A9A696"></div><div class="ab" style="left:1px;top:153px;width:8px;height:1px;background:#fff"></div><div class="cell" style="left:11px;top:136px;width:42px;height:16px;line-height:16px;"><i></i></div><div class="ab" style="left:53px;top:136px;width:1px;height:17px;background:#EBEADB"></div><div class="cell" style="left:54px;top:136px;width:108px;height:16px;line-height:16px;"><i>Mother's Name</i></div><div class="ab" style="left:162px;top:136px;width:1px;height:17px;background:#EBEADB"></div><div class="cell" style="left:163px;top:136px;width:104px;height:16px;line-height:16px;"><i>MOTHER_NAME</i></div><div class="ab" style="left:267px;top:136px;width:1px;height:17px;background:#EBEADB"></div><div class="cell" style="left:268px;top:136px;width:48px;height:16px;line-height:16px;"><i>NULL</i></div><div class="ab" style="left:316px;top:136px;width:1px;height:17px;background:#EBEADB"></div><div class="ab" style="left:11px;top:152px;width:306px;height:1px;background:#EBEADB"></div><div class="ab" style="left:-1px;top:153px;width:11px;height:17px;background:#EBEADB"></div><div class="ab" style="left:10px;top:153px;width:1px;height:17px;background:#A9A696"></div><div class="ab" style="left:1px;top:169px;width:8px;height:1px;background:#A9A696"></div><div class="ab" style="left:1px;top:170px;width:8px;height:1px;background:#fff"></div><div class="cell" style="left:11px;top:153px;width:42px;height:16px;line-height:16px;"><i></i></div><div class="ab" style="left:53px;top:153px;width:1px;height:17px;background:#EBEADB"></div><div class="cell" style="left:54px;top:153px;width:108px;height:16px;line-height:16px;"><i>&nbsp;Spouse's Names</i></div><div class="ab" style="left:162px;top:153px;width:1px;height:17px;background:#EBEADB"></div><div class="cell" style="left:163px;top:153px;width:104px;height:16px;line-height:16px;"><i>SPOUSE_NAME</i></div><div class="ab" style="left:267px;top:153px;width:1px;height:17px;background:#EBEADB"></div><div class="cell" style="left:268px;top:153px;width:48px;height:16px;line-height:16px;"><i>NULL</i></div><div class="ab" style="left:316px;top:153px;width:1px;height:17px;background:#EBEADB"></div><div class="ab" style="left:11px;top:169px;width:306px;height:1px;background:#EBEADB"></div><div class="ab" style="left:-1px;top:170px;width:11px;height:17px;background:#EBEADB"></div><div class="ab" style="left:10px;top:170px;width:1px;height:17px;background:#A9A696"></div><div class="ab" style="left:1px;top:186px;width:8px;height:1px;background:#A9A696"></div><div class="ab" style="left:1px;top:187px;width:8px;height:1px;background:#fff"></div><div class="cell" style="left:11px;top:170px;width:42px;height:16px;line-height:16px;"><i></i></div><div class="ab" style="left:53px;top:170px;width:1px;height:17px;background:#EBEADB"></div><div class="cell" style="left:54px;top:170px;width:108px;height:16px;line-height:16px;"><i>&nbsp;Birthdate</i></div><div class="ab" style="left:162px;top:170px;width:1px;height:17px;background:#EBEADB"></div><div class="cell" style="left:163px;top:170px;width:104px;height:16px;line-height:16px;"><i>BIRTH_DATE</i></div><div class="ab" style="left:267px;top:170px;width:1px;height:17px;background:#EBEADB"></div><div class="cell" style="left:268px;top:170px;width:48px;height:16px;line-height:16px;"><i>NULL</i></div><div class="ab" style="left:316px;top:170px;width:1px;height:17px;background:#EBEADB"></div><div class="ab" style="left:11px;top:186px;width:306px;height:1px;background:#EBEADB"></div><div class="ab" style="left:-1px;top:187px;width:11px;height:17px;background:#EBEADB"></div><div class="ab" style="left:10px;top:187px;width:1px;height:17px;background:#A9A696"></div><div class="ab" style="left:1px;top:203px;width:8px;height:1px;background:#A9A696"></div><div class="ab" style="left:1px;top:204px;width:8px;height:1px;background:#fff"></div><div class="cell" style="left:11px;top:187px;width:42px;height:16px;line-height:16px;"><i></i></div><div class="ab" style="left:53px;top:187px;width:1px;height:17px;background:#EBEADB"></div><div class="cell" style="left:54px;top:187px;width:108px;height:16px;line-height:16px;"><i>Nationality</i></div><div class="ab" style="left:162px;top:187px;width:1px;height:17px;background:#EBEADB"></div><div class="cell" style="left:163px;top:187px;width:104px;height:16px;line-height:16px;"><i>NATIONALITY</i></div><div class="ab" style="left:267px;top:187px;width:1px;height:17px;background:#EBEADB"></div><div class="cell" style="left:268px;top:187px;width:48px;height:16px;line-height:16px;"><i>NULL</i></div><div class="ab" style="left:316px;top:187px;width:1px;height:17px;background:#EBEADB"></div><div class="ab" style="left:11px;top:203px;width:306px;height:1px;background:#EBEADB"></div><div class="ab" style="left:-1px;top:204px;width:11px;height:17px;background:#EBEADB"></div><div class="ab" style="left:10px;top:204px;width:1px;height:17px;background:#A9A696"></div><div class="ab" style="left:1px;top:220px;width:8px;height:1px;background:#A9A696"></div><div class="ab" style="left:1px;top:221px;width:8px;height:1px;background:#fff"></div><div class="cell" style="left:11px;top:204px;width:42px;height:16px;line-height:16px;"><i></i></div><div class="ab" style="left:53px;top:204px;width:1px;height:17px;background:#EBEADB"></div><div class="cell" style="left:54px;top:204px;width:108px;height:16px;line-height:16px;"><i>&nbsp;Tribe</i></div><div class="ab" style="left:162px;top:204px;width:1px;height:17px;background:#EBEADB"></div><div class="cell" style="left:163px;top:204px;width:104px;height:16px;line-height:16px;"><i>TRIBE</i></div><div class="ab" style="left:267px;top:204px;width:1px;height:17px;background:#EBEADB"></div><div class="cell" style="left:268px;top:204px;width:48px;height:16px;line-height:16px;"><i>NULL</i></div><div class="ab" style="left:316px;top:204px;width:1px;height:17px;background:#EBEADB"></div><div class="ab" style="left:11px;top:220px;width:306px;height:1px;background:#EBEADB"></div><div class="ab" style="left:-1px;top:221px;width:11px;height:17px;background:#EBEADB"></div><div class="ab" style="left:10px;top:221px;width:1px;height:17px;background:#A9A696"></div><div class="ab" style="left:1px;top:237px;width:8px;height:1px;background:#A9A696"></div><div class="ab" style="left:1px;top:238px;width:8px;height:1px;background:#fff"></div><div class="cell" style="left:11px;top:221px;width:42px;height:16px;line-height:16px;"><i></i></div><div class="ab" style="left:53px;top:221px;width:1px;height:17px;background:#EBEADB"></div><div class="cell" style="left:54px;top:221px;width:108px;height:16px;line-height:16px;"><i>Country of Birth</i></div><div class="ab" style="left:162px;top:221px;width:1px;height:17px;background:#EBEADB"></div><div class="cell" style="left:163px;top:221px;width:104px;height:16px;line-height:16px;"><i>COUNTRY_OF_BI...</i></div><div class="ab" style="left:267px;top:221px;width:1px;height:17px;background:#EBEADB"></div><div class="cell" style="left:268px;top:221px;width:48px;height:16px;line-height:16px;"><i>NULL</i></div><div class="ab" style="left:316px;top:221px;width:1px;height:17px;background:#EBEADB"></div><div class="ab" style="left:11px;top:237px;width:306px;height:1px;background:#EBEADB"></div><div class="ab" style="left:-1px;top:238px;width:11px;height:17px;background:#EBEADB"></div><div class="ab" style="left:10px;top:238px;width:1px;height:17px;background:#A9A696"></div><div class="ab" style="left:1px;top:254px;width:8px;height:1px;background:#A9A696"></div><div class="ab" style="left:1px;top:255px;width:8px;height:1px;background:#fff"></div><div class="cell" style="left:11px;top:238px;width:42px;height:16px;line-height:16px;"><i></i></div><div class="ab" style="left:53px;top:238px;width:1px;height:17px;background:#EBEADB"></div><div class="cell" style="left:54px;top:238px;width:108px;height:16px;line-height:16px;"><i>Province of Birth</i></div><div class="ab" style="left:162px;top:238px;width:1px;height:17px;background:#EBEADB"></div><div class="cell" style="left:163px;top:238px;width:104px;height:16px;line-height:16px;"><i>PROVINCE_OF_BI...</i></div><div class="ab" style="left:267px;top:238px;width:1px;height:17px;background:#EBEADB"></div><div class="cell" style="left:268px;top:238px;width:48px;height:16px;line-height:16px;"><i>NULL</i></div><div class="ab" style="left:316px;top:238px;width:1px;height:17px;background:#EBEADB"></div><div class="ab" style="left:11px;top:254px;width:306px;height:1px;background:#EBEADB"></div><div class="ab" style="left:-1px;top:255px;width:11px;height:17px;background:#EBEADB"></div><div class="ab" style="left:10px;top:255px;width:1px;height:17px;background:#A9A696"></div><div class="ab" style="left:1px;top:271px;width:8px;height:1px;background:#A9A696"></div><div class="ab" style="left:1px;top:272px;width:8px;height:1px;background:#fff"></div><div class="cell" style="left:11px;top:255px;width:42px;height:16px;line-height:16px;"><i></i></div><div class="ab" style="left:53px;top:255px;width:1px;height:17px;background:#EBEADB"></div><div class="cell" style="left:54px;top:255px;width:108px;height:16px;line-height:16px;"><i>City of Birth</i></div><div class="ab" style="left:162px;top:255px;width:1px;height:17px;background:#EBEADB"></div><div class="cell" style="left:163px;top:255px;width:104px;height:16px;line-height:16px;"><i>CITY_OF_BIRTH</i></div><div class="ab" style="left:267px;top:255px;width:1px;height:17px;background:#EBEADB"></div><div class="cell" style="left:268px;top:255px;width:48px;height:16px;line-height:16px;"><i>NULL</i></div><div class="ab" style="left:316px;top:255px;width:1px;height:17px;background:#EBEADB"></div><div class="ab" style="left:11px;top:271px;width:306px;height:1px;background:#EBEADB"></div><div class="ab" style="left:-1px;top:272px;width:11px;height:17px;background:#EBEADB"></div><div class="ab" style="left:10px;top:272px;width:1px;height:17px;background:#A9A696"></div><div class="ab" style="left:1px;top:288px;width:8px;height:1px;background:#A9A696"></div><div class="ab" style="left:1px;top:289px;width:8px;height:1px;background:#fff"></div><div class="cell" style="left:11px;top:272px;width:42px;height:16px;line-height:16px;"><i></i></div><div class="ab" style="left:53px;top:272px;width:1px;height:17px;background:#EBEADB"></div><div class="cell" style="left:54px;top:272px;width:108px;height:16px;line-height:16px;"><i>Occupation</i></div><div class="ab" style="left:162px;top:272px;width:1px;height:17px;background:#EBEADB"></div><div class="cell" style="left:163px;top:272px;width:104px;height:16px;line-height:16px;"><i>OCCUPATION</i></div><div class="ab" style="left:267px;top:272px;width:1px;height:17px;background:#EBEADB"></div><div class="cell" style="left:268px;top:272px;width:48px;height:16px;line-height:16px;"><i>NULL</i></div><div class="ab" style="left:316px;top:272px;width:1px;height:17px;background:#EBEADB"></div><div class="ab" style="left:11px;top:288px;width:306px;height:1px;background:#EBEADB"></div></div>
<div class="ab" style="left:926px;top:140px;width:17px;height:287px;background:linear-gradient(to right,#F3F1EA,#FEFEFB 60%,#F3F1EA)"></div>
<div class="ab" style="left:926px;top:140px;width:17px;height:287px;background:linear-gradient(to right,#F3F1EA,#FEFEFB 60%,#F3F1EA);box-shadow:inset 1px 0 0 #fff"></div>
<div class="sb" style="left:927px;top:139px;width:15px;height:16px;box-shadow:0 1px 0 #A9BDE9"><svg class="ab" style="left:-1.0px;top:-0.5px" width="15" height="15"><path d="M3.5 9.5L7.5 5.5L11.5 9.5" stroke="#4D6185" stroke-width="2.2" fill="none"/></svg></div>
<div class="sb" style="left:927px;top:157px;width:15px;height:130px;box-shadow:0 1px 0 #A9BDE9"><svg class="ab" style="left:2px;top:60px" width="8" height="8"><path d="M0 1.5h8M0 3.5h8M0 5.5h8M0 7.5h8" stroke="#EEF4FE" stroke-width="1"/><path d="M1 2.5h7M1 4.5h7M1 6.5h7" stroke="#8CB0F8" stroke-width="1"/></svg></div>
<div class="sb" style="left:927px;top:410px;width:15px;height:16px;box-shadow:0 1px 0 #A9BDE9"><svg class="ab" style="left:-1.0px;top:-0.5px" width="15" height="15"><path d="M3.5 5.5L7.5 9.5L11.5 5.5" stroke="#4D6185" stroke-width="2.2" fill="none"/></svg></div>
<div class="chk" style="left:506px;top:159px"><svg class="ab" style="left:1px;top:1px" width="11" height="11"><path d="M1.8 4.3L4.3 7.8L8.8 2.3" stroke="#21A121" stroke-width="2.5" fill="none"/></svg></div>
<div class="chk" style="left:506px;top:176px"><svg class="ab" style="left:1px;top:1px" width="11" height="11"><path d="M1.8 4.3L4.3 7.8L8.8 2.3" stroke="#21A121" stroke-width="2.5" fill="none"/></svg></div>
<div class="chk" style="left:506px;top:193px"><svg class="ab" style="left:1px;top:1px" width="11" height="11"><path d="M1.8 4.3L4.3 7.8L8.8 2.3" stroke="#21A121" stroke-width="2.5" fill="none"/></svg></div>
<div class="chk" style="left:506px;top:210px"><svg class="ab" style="left:1px;top:1px" width="11" height="11"><path d="M1.8 4.3L4.3 7.8L8.8 2.3" stroke="#21A121" stroke-width="2.5" fill="none"/></svg></div>
<div class="chk" style="left:506px;top:227px"><svg class="ab" style="left:1px;top:1px" width="11" height="11"><path d="M1.8 4.3L4.3 7.8L8.8 2.3" stroke="#21A121" stroke-width="2.5" fill="none"/></svg></div>
<div class="chk" style="left:506px;top:244px"><svg class="ab" style="left:1px;top:1px" width="11" height="11"><path d="M1.8 4.3L4.3 7.8L8.8 2.3" stroke="#21A121" stroke-width="2.5" fill="none"/></svg></div>
<div class="chk" style="left:506px;top:261px"><svg class="ab" style="left:1px;top:1px" width="11" height="11"><path d="M1.8 4.3L4.3 7.8L8.8 2.3" stroke="#21A121" stroke-width="2.5" fill="none"/></svg></div>
<div class="chk" style="left:506px;top:278px"><svg class="ab" style="left:1px;top:1px" width="11" height="11"><path d="M1.8 4.3L4.3 7.8L8.8 2.3" stroke="#21A121" stroke-width="2.5" fill="none"/></svg></div>
<div class="chk" style="left:506px;top:295px"><svg class="ab" style="left:1px;top:1px" width="11" height="11"><path d="M1.8 4.3L4.3 7.8L8.8 2.3" stroke="#21A121" stroke-width="2.5" fill="none"/></svg></div>
<div class="chk" style="left:506px;top:312px"><svg class="ab" style="left:1px;top:1px" width="11" height="11"><path d="M1.8 4.3L4.3 7.8L8.8 2.3" stroke="#21A121" stroke-width="2.5" fill="none"/></svg></div>
<div class="chk" style="left:506px;top:329px"><svg class="ab" style="left:1px;top:1px" width="11" height="11"><path d="M1.8 4.3L4.3 7.8L8.8 2.3" stroke="#21A121" stroke-width="2.5" fill="none"/></svg></div>
<div class="chk" style="left:506px;top:346px"><svg class="ab" style="left:1px;top:1px" width="11" height="11"><path d="M1.8 4.3L4.3 7.8L8.8 2.3" stroke="#21A121" stroke-width="2.5" fill="none"/></svg></div>
<div class="chk" style="left:506px;top:363px"><svg class="ab" style="left:1px;top:1px" width="11" height="11"><path d="M1.8 4.3L4.3 7.8L8.8 2.3" stroke="#21A121" stroke-width="2.5" fill="none"/></svg></div>
<div class="chk" style="left:506px;top:380px"><svg class="ab" style="left:1px;top:1px" width="11" height="11"><path d="M1.8 4.3L4.3 7.8L8.8 2.3" stroke="#21A121" stroke-width="2.5" fill="none"/></svg></div>
<div class="chk" style="left:506px;top:397px"><svg class="ab" style="left:1px;top:1px" width="11" height="11"><path d="M1.8 4.3L4.3 7.8L8.8 2.3" stroke="#21A121" stroke-width="2.5" fill="none"/></svg></div>
<div class="chk" style="left:506px;top:414px"><svg class="ab" style="left:1px;top:1px" width="11" height="11"><path d="M1.8 4.3L4.3 7.8L8.8 2.3" stroke="#21A121" stroke-width="2.5" fill="none"/></svg></div>
<div class="btn" style="left:492px;top:436px;width:74px;height:22px;"></div>
<div class="t" style="left:379.0px;top:441px;width:300px;text-align:center;transform-origin:50% 0">Select All</div>
<div class="btn" style="left:585px;top:436px;width:74px;height:22px;"></div>
<div class="t" style="left:472.0px;top:441px;width:300px;text-align:center;transform-origin:50% 0">Select None</div>
<div class="gb" style="left:8px;top:497px;width:944px;height:80px"></div>
<div class="ab" style="left:16px;top:491px;width:72px;height:16px;background:#3D93F8;border:1px solid #BDB498;left:16px"></div>
<div class="t" style="left:19px;top:493px;color:#fff">4. Import Data</div>
<div class="t" style="left:-221px;width:300px;text-align:right;top:521px;transform-origin:100% 0;">Load Rows</div>
<div class="ed" style="left:88px;top:512px;width:73px;height:21px"></div>
<div class="t" style="left:92px;top:517px;">All</div>
<div class="cbtn" style="left:144px;top:514px;height:17px"><svg class="ab" style="left:-0.5px;top:0.0px" width="15" height="15"><path d="M3.5 5.5L7.5 9.5L11.5 5.5" stroke="#4D6185" stroke-width="2.2" fill="none"/></svg></div>
<div class="t" style="left:-221px;width:300px;text-align:right;top:550px;transform-origin:100% 0;">Load Type</div>
<div class="ed" style="left:88px;top:543px;width:145px;height:21px"></div>
<div class="t" style="left:92px;top:548px;">Append</div>
<div class="cbtn" style="left:216px;top:545px;height:17px"><svg class="ab" style="left:-0.5px;top:0.0px" width="15" height="15"><path d="M3.5 5.5L7.5 9.5L11.5 5.5" stroke="#4D6185" stroke-width="2.2" fill="none"/></svg></div>
<div class="t" style="left:39px;width:300px;text-align:right;top:520px;transform-origin:100% 0;">Skip Rows</div>
<div class="ed" style="left:344px;top:512px;width:105px;height:21px"></div>
<div class="t" style="left:348px;top:517px;margin-top:-2px">0</div>
<div class="ab" style="left:430px;top:514px;width:17px;height:17px;border:1px solid #1C3A6A;border-radius:3px;background:linear-gradient(#FFFFFF,#E4E2D8)">
<svg class="ab" style="left:0;top:0" width="15" height="15"><path d="M1 14L14 1" stroke="#1C3A6A" stroke-width="1"/><path d="M4.5 8V2M2 4.5L4.5 1.5L7 4.5" stroke="#000" stroke-width="1.6" fill="none"/><path d="M10.5 7V13M8 10.5L10.5 13.5L13 10.5" stroke="#000" stroke-width="1.6" fill="none"/></svg></div>
<div class="btn" style="left:492px;top:538px;width:74px;height:23px;"></div>
<div class="t" style="left:379.0px;top:544px;width:300px;text-align:center;transform-origin:50% 0">Import</div>
<div class="btn" style="left:617px;top:538px;width:74px;height:23px;"></div>
<div class="t" style="left:504.0px;top:544px;width:300px;text-align:center;transform-origin:50% 0">Save to Sql</div>
<div class="ab" style="left:745px;top:538px;width:74px;height:23px;border:1px solid #C9C7BA;border-radius:3px;background:#F4F3EE"></div>
<svg class="ab" style="left:760px;top:542px" width="16" height="16"><circle cx="8" cy="8" r="7" fill="none" stroke="#C2C0B0" stroke-width="1"/><circle cx="8" cy="8" r="5" fill="none" stroke="#C2C0B0" stroke-width="1"/><path d="M4.5 4.5L11.5 11.5" stroke="#C2C0B0" stroke-width="2"/></svg>
<div class="t" style="left:782px;top:545px;color:#ACA899">Stop</div>
<div class="btn" style="left:870px;top:538px;width:73px;height:23px;"></div>
<div class="t" style="left:756.5px;top:544px;width:300px;text-align:center;transform-origin:50% 0"></div>
<svg class="ab" style="left:889px;top:541px" width="12" height="18" viewBox="0 0 12 18"><path d="M2 5c0-3 2-4 4.5-4S11 2.5 11 5c0 2-1.5 3-3 4l-0.5 2H4.5L5 8c1-1 2.5-1.5 2.5-3 0-1-0.5-1.5-1.2-1.5S5 4 5 5z" fill="#1BB8C8" stroke="#0A4A6A" stroke-width="0.9"/><circle cx="6" cy="15" r="1.8" fill="#1BB8C8" stroke="#0A4A6A" stroke-width="0.9"/></svg>
<div class="t" style="left:907px;top:545px;"><u>H</u>elp</div>
<div class="ab" style="left:4px;top:621px;width:950px;height:94px;border:1px solid #919B9C;border-right-color:#919B9C;background:linear-gradient(to bottom,#FCFCFE 0%,#FAFAF8 60%,#F4F3EE 100%)"></div>
<div class="ab" style="left:58px;top:603px;width:39px;height:19px;border:1px solid #919B9C;border-bottom:none;border-radius:3px 3px 0 0;background:linear-gradient(to bottom,#FFFFFF,#F3F3EF 50%,#E8E8E0)"></div>
<div class="t" style="left:62px;top:608px;">Import</div>
<div class="ab" style="left:98px;top:603px;width:40px;height:19px;border:1px solid #919B9C;border-bottom:none;border-radius:3px 3px 0 0;background:linear-gradient(to bottom,#FFFFFF,#F3F3EF 50%,#E8E8E0)"></div>
<div class="t" style="left:104px;top:608px;">Log</div>
<div class="ab" style="left:4px;top:601px;width:54px;height:22px;border:1px solid #919B9C;border-top:none;border-bottom:none;border-radius:3px 3px 0 0;background:#fff;overflow:hidden"><div class="ab" style="left:0;top:0;width:100px;height:2px;background:#E68B2C"></div><div class="ab" style="left:0;top:2px;width:100px;height:1px;background:#FFC73C"></div></div>
<div class="t" style="left:12px;top:605px;">Preview</div>
<div class="ab" style="left:8px;top:625px;width:943px;height:84px;border:1px solid #7F9DB9;background:#fff"></div>
<div class="ab" style="left:10px;top:627px;width:923px;height:64px;overflow:hidden;background:#fff"><div class="hdr" style="left:0;top:0;width:923px;height:17px"></div><div class="ab" style="left:15px;top:3px;width:1px;height:10px;background:#C7C5B2"></div><div class="ab" style="left:16px;top:3px;width:1px;height:10px;background:#fff"></div><div class="cell" style="left:17px;top:0px;width:161px;height:17px;line-height:18px"><i>CIVIL_AFFAIR_NUMBER</i></div><div class="ab" style="left:176px;top:3px;width:1px;height:10px;background:#C7C5B2"></div><div class="ab" style="left:177px;top:3px;width:1px;height:10px;background:#fff"></div><div class="cell" style="left:178px;top:0px;width:202px;height:17px;line-height:18px"><i>JUMPKIT_NUMBER</i></div><div class="ab" style="left:378px;top:3px;width:1px;height:10px;background:#C7C5B2"></div><div class="ab" style="left:379px;top:3px;width:1px;height:10px;background:#fff"></div><div class="cell" style="left:380px;top:0px;width:153px;height:17px;line-height:18px"><i>FULL_NAME</i></div><div class="ab" style="left:531px;top:3px;width:1px;height:10px;background:#C7C5B2"></div><div class="ab" style="left:532px;top:3px;width:1px;height:10px;background:#fff"></div><div class="cell" style="left:533px;top:0px;width:144px;height:17px;line-height:18px"><i>FIRST_NAME</i></div><div class="ab" style="left:675px;top:3px;width:1px;height:10px;background:#C7C5B2"></div><div class="ab" style="left:676px;top:3px;width:1px;height:10px;background:#fff"></div><div class="cell" style="left:677px;top:0px;width:178px;height:17px;line-height:18px"><i>FATHER_NAME</i></div><div class="ab" style="left:853px;top:3px;width:1px;height:10px;background:#C7C5B2"></div><div class="ab" style="left:854px;top:3px;width:1px;height:10px;background:#fff"></div><div class="cell" style="left:855px;top:0px;width:136px;height:17px;line-height:18px"><i>GRANDFATHER_NAME</i></div><div class="ab" style="left:989px;top:3px;width:1px;height:10px;background:#C7C5B2"></div><div class="ab" style="left:990px;top:3px;width:1px;height:10px;background:#fff"></div><div class="hdr" style="left:0px;top:17px;width:17px;height:17px"></div><div class="ab" style="left:15px;top:20px;width:1px;height:10px;background:#C7C5B2"></div><div class="ab" style="left:16px;top:20px;width:1px;height:10px;background:#fff"></div><div class="cell" style="left:0px;top:17px;width:20px;height:17px;line-height:18px"><i>1</i></div><div class="cell" style="left:17px;top:17px;width:160px;height:16px;line-height:18px;background:#316AC5;color:#fff;"><i>83211124</i></div><div class="ab" style="left:177px;top:17px;width:1px;height:17px;background:#EBEADB"></div><div class="cell" style="left:178px;top:17px;width:201px;height:16px;line-height:18px;"><i>0IQ000756-20080104212400-LSMS-20701</i></div><div class="ab" style="left:379px;top:17px;width:1px;height:17px;background:#EBEADB"></div><div class="cell" style="left:380px;top:17px;width:152px;height:16px;line-height:18px;"><i>A</i></div><div class="ab" style="left:532px;top:17px;width:1px;height:17px;background:#EBEADB"></div><div class="cell" style="left:533px;top:17px;width:143px;height:16px;line-height:18px;"><i></i></div><div class="ab" style="left:676px;top:17px;width:1px;height:17px;background:#EBEADB"></div><div class="cell" style="left:677px;top:17px;width:177px;height:16px;line-height:18px;"><i></i></div><div class="ab" style="left:854px;top:17px;width:1px;height:17px;background:#EBEADB"></div><div class="cell" style="left:855px;top:17px;width:135px;height:16px;line-height:18px;"><i></i></div><div class="ab" style="left:990px;top:17px;width:1px;height:17px;background:#EBEADB"></div><div class="ab" style="left:17px;top:33px;width:974px;height:1px;background:#EBEADB"></div><div class="hdr" style="left:0px;top:34px;width:17px;height:17px"></div><div class="ab" style="left:15px;top:37px;width:1px;height:10px;background:#C7C5B2"></div><div class="ab" style="left:16px;top:37px;width:1px;height:10px;background:#fff"></div><div class="cell" style="left:0px;top:34px;width:20px;height:17px;line-height:18px"><i>2</i></div><div class="cell" style="left:17px;top:34px;width:160px;height:16px;line-height:18px;"><i>62100103</i></div><div class="ab" style="left:177px;top:34px;width:1px;height:17px;background:#EBEADB"></div><div class="cell" style="left:178px;top:34px;width:201px;height:16px;line-height:18px;"><i>0IQ000756-20080104213023-LSMS-20701</i></div><div class="ab" style="left:379px;top:34px;width:1px;height:17px;background:#EBEADB"></div><div class="cell" style="left:380px;top:34px;width:152px;height:16px;line-height:18px;"><i>B</i></div><div class="ab" style="left:532px;top:34px;width:1px;height:17px;background:#EBEADB"></div><div class="cell" style="left:533px;top:34px;width:143px;height:16px;line-height:18px;"><i></i></div><div class="ab" style="left:676px;top:34px;width:1px;height:17px;background:#EBEADB"></div><div class="cell" style="left:677px;top:34px;width:177px;height:16px;line-height:18px;"><i></i></div><div class="ab" style="left:854px;top:34px;width:1px;height:17px;background:#EBEADB"></div><div class="cell" style="left:855px;top:34px;width:135px;height:16px;line-height:18px;"><i></i></div><div class="ab" style="left:990px;top:34px;width:1px;height:17px;background:#EBEADB"></div><div class="ab" style="left:17px;top:50px;width:974px;height:1px;background:#EBEADB"></div><div class="hdr" style="left:0px;top:51px;width:17px;height:17px"></div><div class="ab" style="left:15px;top:54px;width:1px;height:10px;background:#C7C5B2"></div><div class="ab" style="left:16px;top:54px;width:1px;height:10px;background:#fff"></div><div class="cell" style="left:0px;top:51px;width:20px;height:17px;line-height:18px"><i>3</i></div><div class="cell" style="left:17px;top:51px;width:160px;height:16px;line-height:18px;"><i>87211236</i></div><div class="ab" style="left:177px;top:51px;width:1px;height:17px;background:#EBEADB"></div><div class="cell" style="left:178px;top:51px;width:201px;height:16px;line-height:18px;"><i>0IQ000756-20080104213648-LSMS-20701</i></div><div class="ab" style="left:379px;top:51px;width:1px;height:17px;background:#EBEADB"></div><div class="cell" style="left:380px;top:51px;width:152px;height:16px;line-height:18px;"><i>C</i></div><div class="ab" style="left:532px;top:51px;width:1px;height:17px;background:#EBEADB"></div><div class="cell" style="left:533px;top:51px;width:143px;height:16px;line-height:18px;"><i></i></div><div class="ab" style="left:676px;top:51px;width:1px;height:17px;background:#EBEADB"></div><div class="cell" style="left:677px;top:51px;width:177px;height:16px;line-height:18px;"><i></i></div><div class="ab" style="left:854px;top:51px;width:1px;height:17px;background:#EBEADB"></div><div class="cell" style="left:855px;top:51px;width:135px;height:16px;line-height:18px;"><i></i></div><div class="ab" style="left:990px;top:51px;width:1px;height:17px;background:#EBEADB"></div><div class="ab" style="left:17px;top:67px;width:974px;height:1px;background:#EBEADB"></div></div>
<div class="ab" style="left:933px;top:627px;width:17px;height:64px;background:linear-gradient(to right,#F3F1EA,#FEFEFB 60%,#F3F1EA)"></div>
<div class="ab" style="left:933px;top:627px;width:17px;height:64px;background:linear-gradient(to right,#F3F1EA,#FEFEFB 60%,#F3F1EA);box-shadow:inset 1px 0 0 #fff"></div>
<div class="sb" style="left:934px;top:626px;width:15px;height:16px;box-shadow:0 1px 0 #A9BDE9"><svg class="ab" style="left:-1.0px;top:-0.5px" width="15" height="15"><path d="M3.5 9.5L7.5 5.5L11.5 9.5" stroke="#4D6185" stroke-width="2.2" fill="none"/></svg></div>
<div class="sb" style="left:934px;top:644px;width:15px;height:16px;box-shadow:0 1px 0 #A9BDE9"><svg class="ab" style="left:2px;top:3px" width="8" height="8"><path d="M0 1.5h8M0 3.5h8M0 5.5h8M0 7.5h8" stroke="#EEF4FE" stroke-width="1"/><path d="M1 2.5h7M1 4.5h7M1 6.5h7" stroke="#8CB0F8" stroke-width="1"/></svg></div>
<div class="sb" style="left:934px;top:674px;width:15px;height:16px;box-shadow:0 1px 0 #A9BDE9"><svg class="ab" style="left:-1.0px;top:-0.5px" width="15" height="15"><path d="M3.5 5.5L7.5 9.5L11.5 5.5" stroke="#4D6185" stroke-width="2.2" fill="none"/></svg></div>
<div class="ab" style="left:10px;top:691px;width:923px;height:17px;background:linear-gradient(to bottom,#F3F1EA,#FEFEFB 60%,#F3F1EA)"></div>
<div class="sb" style="left:10px;top:691px;width:16px;height:15px;box-shadow:0 1px 0 #A9BDE9"><svg class="ab" style="left:-0.5px;top:-1.0px" width="15" height="15"><path d="M9.5 3.5L5.5 7.5L9.5 11.5" stroke="#4D6185" stroke-width="2.2" fill="none"/></svg></div>
<div class="sb" style="left:27px;top:691px;width:16px;height:15px;box-shadow:0 1px 0 #A9BDE9"><svg class="ab" style="left:3px;top:2px" width="9" height="8"><path d="M0.5 0v8M2.5 0v8M4.5 0v8M6.5 0v8" stroke="#EEF4FE" stroke-width="1"/><path d="M1.5 1v7M3.5 1v7M5.5 1v7M7.5 1v7" stroke="#8CB0F8" stroke-width="1"/></svg></div>
<div class="sb" style="left:916px;top:691px;width:16px;height:15px;box-shadow:0 1px 0 #A9BDE9"><svg class="ab" style="left:-0.5px;top:-1.0px" width="15" height="15"><path d="M5.5 3.5L9.5 7.5L5.5 11.5" stroke="#4D6185" stroke-width="2.2" fill="none"/></svg></div>
<div class="ab" style="left:933px;top:691px;width:17px;height:17px;background:#ECE9D8"></div>
<svg class="ab" style="left:543px;top:646px" width="34" height="17" viewBox="0 0 34 17"><path d="M19.5 2.2V9.6" stroke="#000" stroke-width="1.2" fill="none" stroke-linecap="square"/><path d="M2.6 8.4H17.6" stroke="#000" stroke-width="2" fill="none" stroke-linecap="square"/><path d="M12.2 5.9H16.2" stroke="#000" stroke-width="1.6" fill="none" stroke-linecap="square"/><path d="M4.5 4V8" stroke="#000" stroke-width="1.2" fill="none" stroke-linecap="square"/><path d="M2.5 7.2V9.4" stroke="#000" stroke-width="1.3" fill="none" stroke-linecap="square"/><circle cx="9.4" cy="8.5" r="1.25" stroke="#000" stroke-width="1.3" fill="none"/></svg>
<svg class="ab" style="left:543px;top:662px" width="34" height="17" viewBox="0 0 34 17"><path d="M2.6 9.8H22.5" stroke="#000" stroke-width="2" fill="none" stroke-linecap="square"/><path d="M16.8 3.2V10.6" stroke="#000" stroke-width="1.1" fill="none" stroke-linecap="square"/><path d="M20.6 2.8h0.1M22.6 2.8h0.1" stroke="#000" stroke-width="1.6" fill="none" stroke-linecap="square"/><path d="M6.6 7.3V9.5M9.1 7.3V9.5M12.2 7.3V9.5" stroke="#000" stroke-width="1.1" fill="none" stroke-linecap="square"/><path d="M3.4 10V13.6" stroke="#000" stroke-width="1.3" fill="none" stroke-linecap="square"/><circle cx="22.6" cy="7.1" r="1.35" stroke="#000" stroke-width="1.3" fill="none"/><circle cx="4.1" cy="8.3" r="1.5" stroke="#000" stroke-width="1.3" fill="none"/></svg>
<svg class="ab" style="left:543px;top:678px" width="34" height="12" viewBox="0 0 34 12"><path d="M2.5 10.8H22.8" stroke="#000" stroke-width="1.8" fill="none" stroke-linecap="square"/><path d="M4.4 6V9.6" stroke="#000" stroke-width="1.2" fill="none" stroke-linecap="square"/><path d="M2.4 9.3V11" stroke="#000" stroke-width="1.3" fill="none" stroke-linecap="square"/><path d="M12.4 7.8H16" stroke="#000" stroke-width="1.6" fill="none" stroke-linecap="square"/><circle cx="9.4" cy="10.2" r="1.2" stroke="#000" stroke-width="1.3" fill="none"/><circle cx="21.5" cy="10.2" r="1.2" stroke="#000" stroke-width="1.3" fill="none"/></svg>
<svg class="ab" style="left:687px;top:646px" width="34" height="17" viewBox="0 0 34 17"><path d="M8.5 2.2V9.4" stroke="#000" stroke-width="1.2" fill="none" stroke-linecap="square"/><path d="M8.5 9H21.6" stroke="#000" stroke-width="1.9" fill="none" stroke-linecap="square"/><path d="M17 5.8H21.8V9" stroke="#000" stroke-width="1.6" fill="none" stroke-linecap="square"/><path d="M14 6.8V9" stroke="#000" stroke-width="1.1" fill="none" stroke-linecap="square"/><path d="M13.6 11.8h0.1M18.4 11.8h0.1" stroke="#000" stroke-width="1.5" fill="none" stroke-linecap="square"/><path d="M5.6 6V10Q5 12 2.4 11.7" stroke="#000" stroke-width="1.4" fill="none" stroke-linecap="square"/></svg>
<svg class="ab" style="left:687px;top:662px" width="34" height="17" viewBox="0 0 34 17"><path d="M24.5 9.4H30" stroke="#000" stroke-width="1.6" fill="none" stroke-linecap="square"/><path d="M27.7 3h0.1" stroke="#000" stroke-width="1.5" fill="none" stroke-linecap="square"/><path d="M24 7.5V10Q23.5 12.5 21 12.6" stroke="#000" stroke-width="1.4" fill="none" stroke-linecap="square"/><path d="M15.5 4.5V9.6H18.8V7.5Q17.5 6 15.5 7" stroke="#000" stroke-width="1.3" fill="none" stroke-linecap="square"/><path d="M11 10Q10.6 13 7.5 12.8" stroke="#000" stroke-width="1.3" fill="none" stroke-linecap="square"/><path d="M5.8 5.3Q6.5 7.5 5.8 9.6H3V8" stroke="#000" stroke-width="1.4" fill="none" stroke-linecap="square"/><circle cx="28.5" cy="7" r="1.4" stroke="#000" stroke-width="1.3" fill="none"/><circle cx="10" cy="9" r="1.3" stroke="#000" stroke-width="1.3" fill="none"/></svg>
<svg class="ab" style="left:687px;top:678px" width="34" height="12" viewBox="0 0 34 12"><path d="M10.8 4.2V11.5" stroke="#000" stroke-width="1.2" fill="none" stroke-linecap="square"/><path d="M10.8 10.7H27.5" stroke="#000" stroke-width="1.9" fill="none" stroke-linecap="square"/><path d="M27.3 9.5Q26 6.5 23.8 7Q22.8 8.5 24.5 9.5" stroke="#000" stroke-width="1.4" fill="none" stroke-linecap="square"/><path d="M15.3 3.8h0.1" stroke="#000" stroke-width="1.5" fill="none" stroke-linecap="square"/><path d="M19.5 8.5V10.5" stroke="#000" stroke-width="1" fill="none" stroke-linecap="square"/><path d="M5.4 6.7h0.1M7.9 9.3h0.1M4.4 10.4h0.1M3.3 11.4h0.1" stroke="#000" stroke-width="1.4" fill="none" stroke-linecap="square"/><circle cx="15.3" cy="8.2" r="1.1" stroke="#000" stroke-width="1.2" fill="none"/></svg>
<svg class="ab" style="left:865px;top:646px" width="34" height="17" viewBox="0 0 34 17"><path d="M10.5 2.5V9" stroke="#000" stroke-width="1.2" fill="none" stroke-linecap="square"/><path d="M10.5 8.7H25" stroke="#000" stroke-width="1.9" fill="none" stroke-linecap="square"/><path d="M25.5 7.5Q25 4.5 22.5 4.8Q21.5 6.2 23.5 7" stroke="#000" stroke-width="1.5" fill="none" stroke-linecap="square"/><path d="M14.5 6.5H17V8.5" stroke="#000" stroke-width="1.6" fill="none" stroke-linecap="square"/><path d="M16.3 11.7h0.1" stroke="#000" stroke-width="1.5" fill="none" stroke-linecap="square"/><path d="M2.3 5.2H7.5M5 5.2Q1.5 6 2.2 10Q3 12 7.5 11.8" stroke="#000" stroke-width="1.4" fill="none" stroke-linecap="square"/><path d="M5.5 8.7h0.1" stroke="#000" stroke-width="1.4" fill="none" stroke-linecap="square"/></svg>
<svg class="ab" style="left:865px;top:662px" width="34" height="17" viewBox="0 0 34 17"><path d="M11.4 3.3V10.3M13.6 3.3V10.3" stroke="#000" stroke-width="1.2" fill="none" stroke-linecap="square"/><path d="M6.5 10H24.5" stroke="#000" stroke-width="1.9" fill="none" stroke-linecap="square"/><path d="M18.8 10Q19 6.3 22.5 6.3Q25 6.5 24.6 9" stroke="#000" stroke-width="1.6" fill="none" stroke-linecap="square"/><path d="M2.3 6H7V10M5 6Q1.5 6.5 2.2 11Q3 13.3 7.5 12.8" stroke="#000" stroke-width="1.4" fill="none" stroke-linecap="square"/></svg>
<svg class="ab" style="left:865px;top:678px" width="34" height="12" viewBox="0 0 34 12"><path d="M12.3 4.2V10.5" stroke="#000" stroke-width="1.2" fill="none" stroke-linecap="square"/><path d="M2.5 10.2H19.3" stroke="#000" stroke-width="1.9" fill="none" stroke-linecap="square"/><path d="M14.5 8H19.3V10" stroke="#000" stroke-width="1.6" fill="none" stroke-linecap="square"/><path d="M16.5 5h0.1" stroke="#000" stroke-width="1.6" fill="none" stroke-linecap="square"/><path d="M8.3 3.8h0.1" stroke="#000" stroke-width="1.6" fill="none" stroke-linecap="square"/><path d="M2.5 8V10.5" stroke="#000" stroke-width="1.3" fill="none" stroke-linecap="square"/><circle cx="8" cy="8.3" r="1.1" stroke="#000" stroke-width="1.3" fill="none"/></svg>
</body></html>
